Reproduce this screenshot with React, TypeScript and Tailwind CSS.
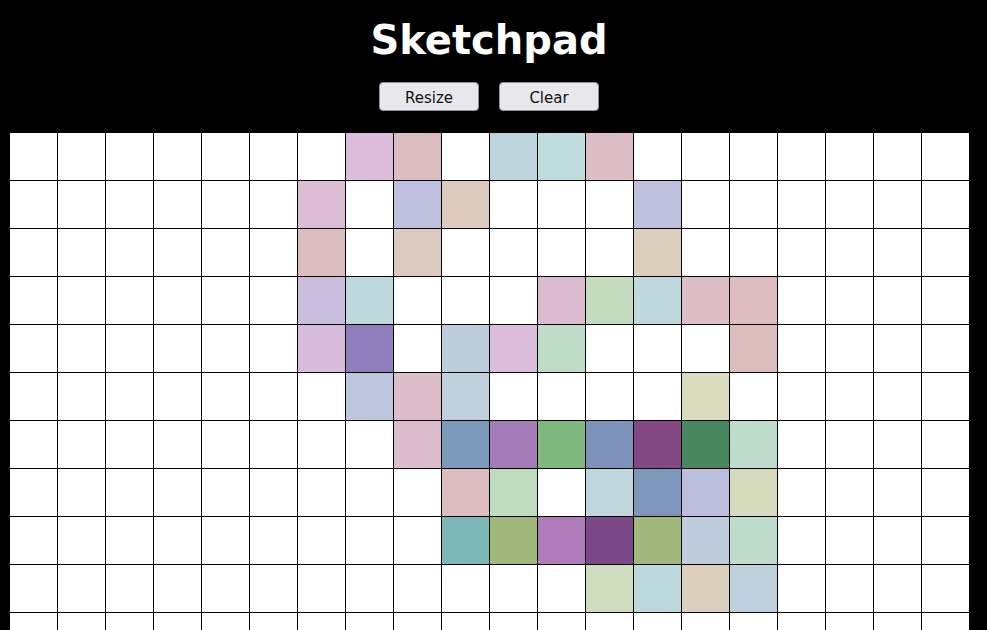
import React from 'react';

const ROWS = 20;
const COLS = 20;

// painted cells, keyed "row-col"
const painted: Record<string, string> = {
  '0-7': '#dbbcdb', '0-8': '#dcbdbf', '0-10': '#bed4dc', '0-11': '#bedddc', '0-12': '#dcbcc5',
  '1-6': '#ddbdd4', '1-8': '#bec0dd', '1-9': '#dccbbd', '1-13': '#bec0dd',
  '2-6': '#dcbdc2', '2-8': '#dcc9bf', '2-13': '#dccebd',
  '3-6': '#cbbddd', '3-7': '#bed8dc', '3-11': '#dcbbd1', '3-12': '#c3dcbe', '3-13': '#bed8dc', '3-14': '#dcbcc5', '3-15': '#dcbcc0',
  '4-6': '#d7bcdc', '4-7': '#907dbb', '4-9': '#becddc', '4-10': '#dbbcdb', '4-11': '#bedcc8', '4-15': '#dcbdbe',
  '5-7': '#bcc6dc', '5-8': '#dcbdca', '5-9': '#bed1dc', '5-14': '#dbdbbd',
  '6-8': '#dcbdce', '6-9': '#7c9bba', '6-10': '#a47cb8', '6-11': '#7eb87d', '6-12': '#7e91ba', '6-13': '#844885', '6-14': '#48875f', '6-15': '#bedbcb',
  '7-9': '#dcbdbf', '7-10': '#bfdcbf', '7-12': '#bfd6dc', '7-13': '#7d96ba', '7-14': '#bcbcdc', '7-15': '#d6dabd',
  '8-9': '#7bb8b7', '8-10': '#a0b87b', '8-11': '#af7bb8', '8-12': '#7b4a86', '8-13': '#a0b87b', '8-14': '#bfccdc', '8-15': '#bedbcb',
  '9-12': '#d0dcbe', '9-13': '#bed9dc', '9-14': '#dcd0bd', '9-15': '#bed0dc',
};

const Button: React.FC<{ label: string }> = ({ label }) => (
  <button className="w-[100px] h-[29px] pt-[3px] bg-[#e9e9ed] border border-[#8f8f9d] rounded-[4px] text-[15px] leading-[20px] text-[#111] font-['DejaVu_Sans',sans-serif]">
    {label}
  </button>
);

export default function App() {
  const cells = [];
  for (let r = 0; r < ROWS; r++) {
    for (let c = 0; c < COLS; c++) {
      const color = painted[`${r}-${c}`] ?? '#ffffff';
      cells.push(
        <div
          key={`${r}-${c}`}
          className="w-[48px] h-[48px] border-l border-t border-black"
          style={{ backgroundColor: color }}
        />
      );
    }
  }

  return (
    <div className="min-h-screen bg-black">
      <div className="w-[978px] flex flex-col items-center">
        <h1 className="mt-[16px] text-[40px] leading-[48px] font-bold text-white font-['DejaVu_Sans',Verdana,sans-serif]">
          Sketchpad
        </h1>
        <div className="mt-[18px] flex gap-[20px]">
          <Button label="Resize" />
          <Button label="Clear" />
        </div>
        <div className="mt-[21px] grid grid-cols-[repeat(20,48px)] bg-black">
          {cells}
        </div>
      </div>
    </div>
  );
}
